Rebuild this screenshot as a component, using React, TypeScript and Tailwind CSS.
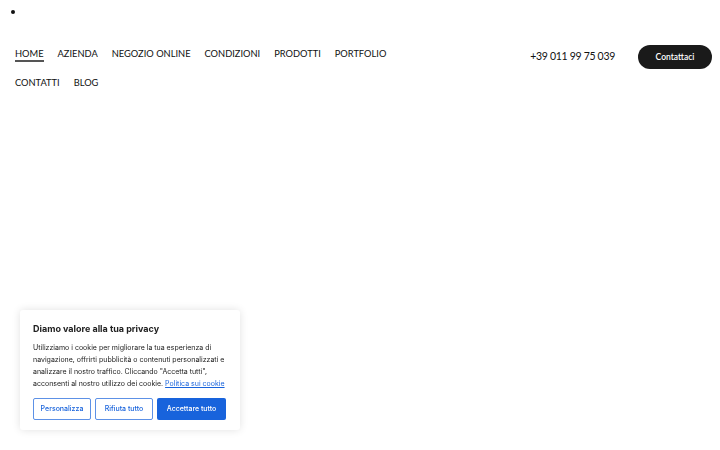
const navItems = ['HOME', 'AZIENDA', 'NEGOZIO ONLINE', 'CONDIZIONI', 'PRODOTTI', 'PORTFOLIO', 'CONTATTI', 'BLOG'];

const CookieBanner = () => {
  return (
    <div className="fixed left-[20px] bottom-[20px] w-[220px] bg-white rounded-[3px] shadow-[0_0_8px_rgba(0,0,0,0.12)] px-[13px] pt-[13px] pb-[10px] font-['Inter',sans-serif]">
      <h2 className="text-[9px] font-bold text-[#212121] leading-[12px]">Diamo valore alla tua privacy</h2>
      <p className="mt-[7px] text-[7px] leading-[12px] text-[#212121]">
        Utilizziamo i cookie per migliorare la tua esperienza di navigazione, offrirti pubblicità o contenuti personalizzati e analizzare il nostro traffico. Cliccando "Accetta tutti", acconsenti al nostro utilizzo dei cookie.{' '}
        <a className="text-[#1863dc] underline">Politica sui cookie</a>
      </p>
      <div className="mt-[8px] flex gap-[4px]">
        <button className="w-[58px] h-[22px] border-[1.5px] border-[#1863dc]/70 rounded-[2px] text-[7px] font-medium text-[#1863dc]">Personalizza</button>
        <button className="w-[58px] h-[22px] border-[1.5px] border-[#1863dc]/70 rounded-[2px] text-[7px] font-medium text-[#1863dc]">Rifiuta tutto</button>
        <button className="w-[69px] h-[22px] bg-[#1863dc] rounded-[2px] text-[7px] font-medium text-white">Accettare tutto</button>
      </div>
    </div>
  );
};

const App = () => {
  return (
    <div className="w-[720px] h-[450px] bg-white relative overflow-hidden font-['Lato',sans-serif] text-[#111]">
      <ul className="list-disc pl-[26px] pt-[3px]">
        <li className="text-[12px] leading-[18px]">&nbsp;</li>
      </ul>
      <header className="mt-[18px] flex items-start justify-between pl-[15px] pr-[8px]">
        <nav className="w-[400px] flex flex-wrap gap-x-[14px]">
          {navItems.map((item) => (
            <a key={item} className="relative h-[29px] flex items-center text-[9.3px] text-[#111]">
              {item}
              {item === 'HOME' && <span className="absolute left-0 right-0 top-[21px] h-[2px] bg-[#555]"></span>}
            </a>
          ))}
        </nav>
        <div className="flex items-center gap-[23px] pt-[6px]">
          <span className="text-[10.5px] tracking-[-0.3px]">+39 011 99 75 039</span>
          <button className="w-[74px] h-[24px] rounded-full bg-[#1a1a1a] text-white text-[8.5px] font-semibold">Contattaci</button>
        </div>
      </header>
      <CookieBanner />
    </div>
  );
};

export default App;
